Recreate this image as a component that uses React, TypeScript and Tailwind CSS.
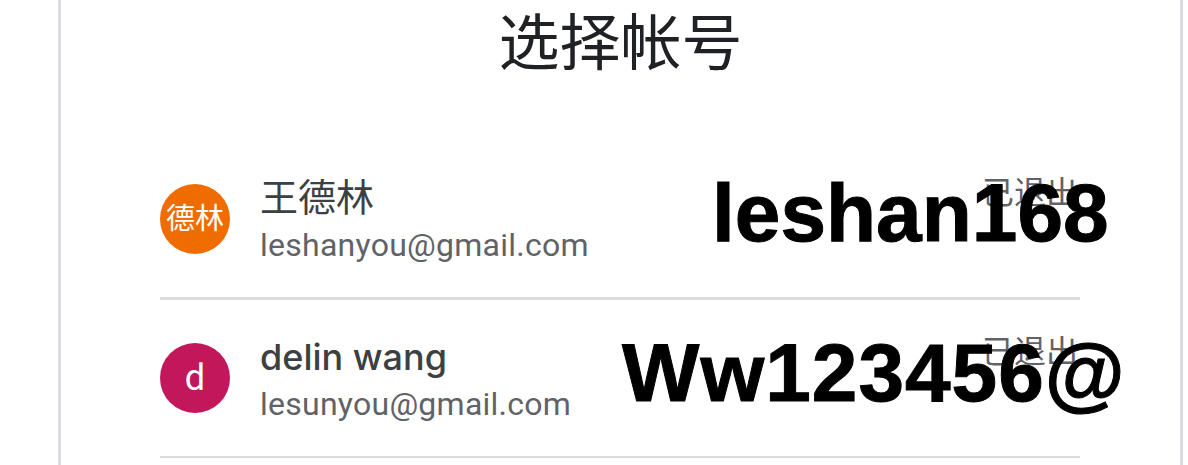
const accounts = [
  {
    initials: "德林",
    rowClass: "h-[160px] border-b-[3px]",
    avatarClass: "bg-[#ef6c00] text-[29px] pt-[3px]",
    name: "王德林",
    nameClass: "text-[38px] leading-[48px]",
    email: "leshanyou@gmail.com",
    signedOutClass: "top-[31px]",
    password: "leshan168",
    passwordClass: "left-[552px] top-[30px]",
  },
  {
    initials: "d",
    rowClass: "h-[158px] border-b-2",
    avatarClass: "bg-[#c2185b] text-[36px]",
    name: "delin wang",
    nameClass: "text-[36px] leading-[48px] font-medium font-['Inter',sans-serif]",
    email: "lesunyou@gmail.com",
    signedOutClass: "top-[30px]",
    password: "Ww123456@",
    passwordClass: "left-[462px] top-[30px] tracking-[1px]",
  },
];

export default function App() {
  return (
    <div className="w-[1188px] h-[465px] overflow-hidden bg-white font-['Roboto','Noto_Sans_CJK_SC',sans-serif]">
      <div className="ml-[58px] w-[1125px] h-[465px] border-x-[3px] border-[#dadce0] px-[99px]">
        <h1 className="h-[140px] pt-[6px] text-center text-[61px] leading-[76px] text-[#202124] font-normal">
          选择帐号
        </h1>

        {accounts.map((account) => (
          <div
            key={account.email}
            className={`relative w-[920px] flex items-center border-[#dadce0] ${account.rowClass}`}
          >
            <div
              className={`w-[70px] h-[70px] rounded-full flex items-center justify-center text-white shrink-0 ${account.avatarClass}`}
            >
              {account.initials}
            </div>
            <div className="ml-[30px] pt-[1px]">
              <div className={`text-[#3c4043] ${account.nameClass}`}>{account.name}</div>
              <div className="mt-[3px] text-[32px] leading-[40px] tracking-[0.25px] text-[#5f6368]">{account.email}</div>
            </div>
            <div className={`absolute right-[2px] text-[32px] leading-[44px] text-[#5f6368] ${account.signedOutClass}`}>
              已退出
            </div>
            <div
              className={`absolute text-[82px] leading-[86px] font-bold text-black [-webkit-text-stroke:1px_black] font-['Liberation_Sans',sans-serif] whitespace-nowrap ${account.passwordClass}`}
            >
              {account.password}
            </div>
          </div>
        ))}
      </div>
    </div>
  );
}
